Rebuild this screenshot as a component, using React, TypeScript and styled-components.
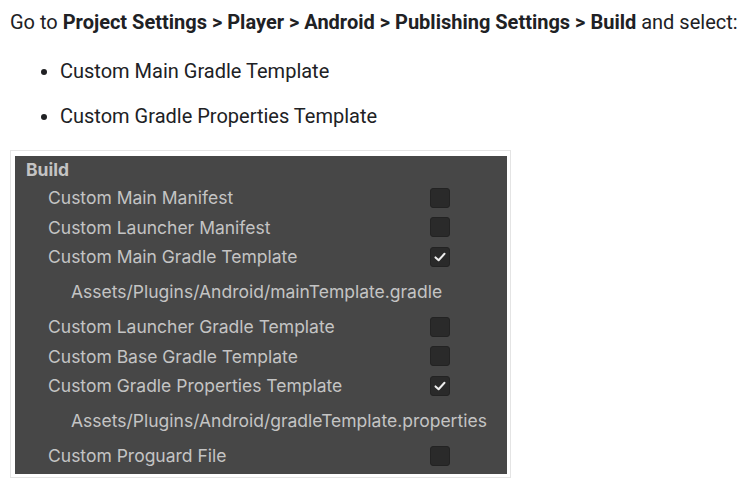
import React from "react";
import styled, { createGlobalStyle } from "styled-components";

const GlobalStyle = createGlobalStyle`
  body {
    margin: 0;
    background: #ffffff;
    font-family: Roboto, "Liberation Sans", sans-serif;
    color: #202124;
  }
`;

const Page = styled.div`
  padding: 0 10px;
`;

const Intro = styled.p`
  margin: 9px 0 0;
  font-size: 20px;
  line-height: 27px;

  b {
    font-weight: 700;
  }
`;

const Bullets = styled.ul`
  margin: 22px 0 0;
  padding-left: 50px;
  font-size: 20px;
  line-height: 27px;
`;

const Bullet = styled.li`
  margin-bottom: 18px;

  &:last-child {
    margin-bottom: 0;
  }
`;

const Frame = styled.div`
  width: 492px;
  margin-top: 20px;
  border: 1px solid #e4e4e4;
  padding: 5px 3px 3px 4px;
  background: #ffffff;
`;

const Panel = styled.div`
  background: #474747;
  color: #c4c4c4;
  font-family: Inter, "Noto Sans", sans-serif;
  font-size: 17.5px;
  padding-bottom: 3px;
`;

const Header = styled.div`
  height: 27px;
  display: flex;
  align-items: center;
  padding-left: 11px;
  font-weight: 700;
`;

const Row = styled.div`
  height: 29.5px;
  display: grid;
  grid-template-columns: 1fr 20px;
  align-items: center;
  padding: 0 57px 0 33px;
`;

const PathRow = styled.div`
  height: 40.5px;
  display: flex;
  align-items: center;
  padding-left: 56px;
`;

const Box = styled.div`
  width: 20px;
  height: 20px;
  box-sizing: border-box;
  border-radius: 3px;
  background: #2a2a2a;
  border: 1px solid #232323;
  display: flex;
  align-items: center;
  justify-content: center;
`;

const Check = () => (
  <svg width="14" height="14" viewBox="0 0 14 14">
    <path
      d="M2.5 7.4 L5.6 10.2 L11.5 3.8"
      fill="none"
      stroke="#eeeeee"
      strokeWidth="2"
      strokeLinecap="round"
      strokeLinejoin="round"
    />
  </svg>
);

type Item =
  | { kind: "toggle"; label: string; checked: boolean }
  | { kind: "path"; label: string };

const items: Item[] = [
  { kind: "toggle", label: "Custom Main Manifest", checked: false },
  { kind: "toggle", label: "Custom Launcher Manifest", checked: false },
  { kind: "toggle", label: "Custom Main Gradle Template", checked: true },
  { kind: "path", label: "Assets/Plugins/Android/mainTemplate.gradle" },
  { kind: "toggle", label: "Custom Launcher Gradle Template", checked: false },
  { kind: "toggle", label: "Custom Base Gradle Template", checked: false },
  { kind: "toggle", label: "Custom Gradle Properties Template", checked: true },
  { kind: "path", label: "Assets/Plugins/Android/gradleTemplate.properties" },
  { kind: "toggle", label: "Custom Proguard File", checked: false },
];

export default function App() {
  return (
    <Page>
      <GlobalStyle />
      <Intro>
        Go to <b>Project Settings &gt; Player &gt; Android &gt; Publishing Settings &gt; Build</b> and select:
      </Intro>
      <Bullets>
        <Bullet>Custom Main Gradle Template</Bullet>
        <Bullet>Custom Gradle Properties Template</Bullet>
      </Bullets>
      <Frame>
        <Panel>
          <Header>Build</Header>
          {items.map((item, i) =>
            item.kind === "toggle" ? (
              <Row key={i}>
                <span>{item.label}</span>
                <Box>{item.checked && <Check />}</Box>
              </Row>
            ) : (
              <PathRow key={i}>{item.label}</PathRow>
            )
          )}
        </Panel>
      </Frame>
    </Page>
  );
}
